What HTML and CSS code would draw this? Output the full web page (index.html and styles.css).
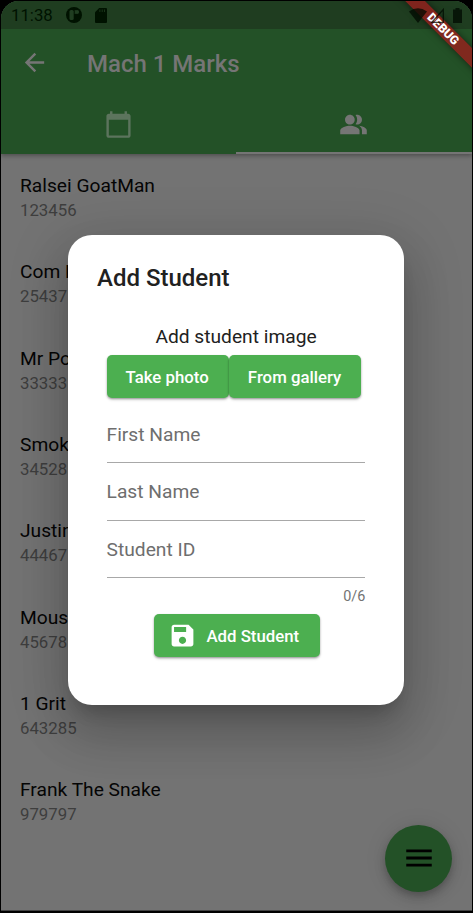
FILE: index.html
```html
<!DOCTYPE html>
<html lang="en">
<head>
<meta charset="utf-8">
<title>Mach 1 Marks</title>
<link rel="stylesheet" href="styles.css">
</head>
<body>
<div class="screen">
  <header class="header">
    <div class="status">
      <span class="clock">11:38</span>
      <svg class="st-app" viewBox="0 0 16 16"><circle cx="8" cy="8" r="8" fill="#001200"/><rect x="3.500" y="3" width="4.200" height="10" rx="1.500" fill="#1f3d20"/><path d="M8.700 3h1v4h-1z" fill="#1f3d20"/><circle cx="11" cy="5" r="2.100" fill="#1f3d20"/></svg>
      <svg class="st-sd" viewBox="0 0 12 15"><path d="M4.200 0H11a1 1 0 0 1 1 1v13a1 1 0 0 1-1 1H1a1 1 0 0 1-1-1V4.200z" fill="#001200"/><path d="M4.900 1.500v2.500M7.200 1.500v2.500M9.500 1.500v2.500" stroke="#1f3d20" stroke-width=".8"/></svg>
      <span class="spacer"></span>
      <div class="signals">
        <svg class="st-wifi" viewBox="0 0 18 15"><path d="M0 3.500Q9-3 18 3.500L9 15z" fill="#000a00"/></svg>
        <svg class="st-cell" viewBox="0 0 13 15"><path d="M12.300 1.500v12.800H.8z" fill="none" stroke="#000a00" stroke-width="1.300"/></svg>
        <svg class="st-batt" viewBox="0 0 9 15"><path d="M2.500 0h4v1.500H9V15H0V1.500h2.500z" fill="#000a00"/></svg>
      </div>
    </div>
    <div class="appbar">
      <svg class="back" viewBox="0 0 24 24"><path d="M20 11H7.830l5.590-5.590L12 4l-8 8 8 8 1.410-1.410L7.830 13H20v-2z" fill="#757575"/></svg>
      <h1 class="title">Mach 1 Marks</h1>
    </div>
    <nav class="tabs">
      <div class="tab"><svg viewBox="0 0 24 24"><path d="M20 3h-1V1h-2v2H7V1H5v2H4c-1.100 0-2 .9-2 2v16c0 1.100.9 2 2 2h16c1.100 0 2-.9 2-2V5c0-1.100-.9-2-2-2zm0 18H4V8h16v13z" fill="#5c745d"/></svg></div>
      <div class="tab active"><svg viewBox="0 0 24 24"><path d="M16.670 13.130C18.040 14.060 19 15.320 19 17v3h4v-3c0-2.180-3.570-3.470-6.330-3.870zM15 12c2.210 0 4-1.790 4-4s-1.790-4-4-4c-.47 0-.91.1-1.330.24C14.500 5.270 15 6.580 15 8s-.5 2.730-1.330 3.760c.42.14.86.24 1.330.24zM9 12c2.210 0 4-1.790 4-4s-1.790-4-4-4-4 1.790-4 4 1.790 4 4 4zM9 13c-2.670 0-8 1.340-8 4v3h16v-3c0-2.660-5.330-4-8-4z" fill="#757575"/></svg></div>
    </nav>
  </header>
  <ul class="list">
    <li><span class="name">Ralsei GoatMan</span><span class="id">123456</span></li>
    <li><span class="name">Com P</span><span class="id">25437</span></li>
    <li><span class="name">Mr Po</span><span class="id">33333</span></li>
    <li><span class="name">Smok</span><span class="id">34528</span></li>
    <li><span class="name">Justin</span><span class="id">44467</span></li>
    <li><span class="name">Mous</span><span class="id">45678</span></li>
    <li><span class="name">1 Grit</span><span class="id">643285</span></li>
    <li><span class="name">Frank The Snake</span><span class="id">979797</span></li>
  </ul>
  <div class="fab"><svg viewBox="0 0 24 24"><path d="M3 18h18v-2H3v2zm0-5h18v-2H3v2zm0-7v2h18V6H3z" fill="#000"/></svg></div>
  <section class="dialog">
    <h2>Add Student</h2>
    <div class="form">
      <p class="prompt">Add student image</p>
      <div class="photo-row">
        <div class="btn take">Take photo</div>
        <div class="btn gallery">From gallery</div>
      </div>
      <div class="field">First Name</div>
      <div class="field">Last Name</div>
      <div class="field">Student ID</div>
      <div class="counter">0/6</div>
      <div class="btn submit"><svg viewBox="0 0 24 24"><path d="M17 3H5c-1.110 0-2 .9-2 2v14c0 1.100.89 2 2 2h14c1.100 0 2-.9 2-2V7l-4-4zm-5 16c-1.660 0-3-1.340-3-3s1.340-3 3-3 3 1.340 3 3-1.340 3-3 3zm3-10H5V5h10v4z" fill="#fff"/></svg><span>Add Student</span></div>
    </div>
  </section>
  <div class="banner">DEBUG</div>
</div>
</body>
</html>
```
FILE: styles.css
```css
* { box-sizing: border-box; }
body {
  margin: 0;
  padding: 1px 1px 2px;
  height: 913px;
  background: #000;
  font-family: Roboto, sans-serif;
  overflow: hidden;
}
h1, h2, p, ul { margin: 0; padding: 0; font-weight: 400; }
svg { display: block; flex: none; }
.screen {
  position: relative;
  height: 910px;
  background: #737373;
  border-radius: 18px 18px 0 0;
  border-bottom: 1px solid #444;
  overflow: hidden;
}
.header {
  height: 153px;
  background: #235127;
  box-shadow: 0 2px 4px rgba(0, 0, 0, .3);
  position: relative;
}
.status {
  height: 28px;
  padding: 0 10px 0 10px;
  display: flex;
  align-items: center;
  background: #1f3d20;
}
.clock { width: 55px; font-size: 16.800px; color: #001200; }
.st-app { width: 16px; height: 16px; margin-right: 13px; }
.st-sd { width: 12px; height: 15px; }
.spacer { flex: 1; }
.signals { display: flex; position: relative; z-index: 2; opacity: .75; }
.st-wifi { width: 18px; height: 15px; margin-right: 4px; }
.st-cell { width: 13px; height: 15px; margin-right: 9px; }
.st-batt { width: 9px; height: 15px; }
.appbar { height: 67px; display: flex; align-items: center; padding-left: 19px; }
.back { width: 29px; height: 29px; margin-right: 38px; }
.title { font-size: 24px; font-weight: 500; color: #757575; line-height: 28px; padding-top: 2px; }
.tabs { display: flex; height: 58px; padding-right: 1px; }
.tab { flex: 1; display: flex; justify-content: center; align-items: center; border-bottom: 2px solid transparent; }
.tab svg { width: 29px; height: 29px; }
.active { border-bottom-color: #757575; margin-right: -1px; padding-right: 1px; }
.list { list-style: none; }
.list li { height: 86.300px; padding: 19.200px 0 0 19px; display: flex; flex-direction: column; }
.name { font-size: 19.200px; line-height: 25px; color: #050505; white-space: nowrap; }
.id { font-size: 16.800px; line-height: 24px; color: #3e3e3e; }
.fab {
  position: absolute;
  left: 384px;
  top: 823.500px;
  width: 67px;
  height: 67px;
  border-radius: 50%;
  background: #235127;
  display: flex;
  align-items: center;
  justify-content: center;
  box-shadow: 0 4px 6px -1px rgba(0, 0, 0, .16), 0 7px 12px rgba(0, 0, 0, .12), 0 1px 22px rgba(0, 0, 0, .1);
}
.fab svg { width: 34px; height: 34px; }
.dialog {
  position: absolute;
  left: 67px;
  top: 234px;
  width: 336px;
  height: 470px;
  padding: 29px 29px 0;
  border-radius: 24px;
  background: #fff;
  box-shadow: 0 13px 18px -8px rgba(0, 0, 0, .2), 0 29px 46px 4px rgba(0, 0, 0, .14), 0 11px 55px 10px rgba(0, 0, 0, .12);
}
h2 { font-size: 24px; line-height: 29px; font-weight: 500; color: #212121; }
.form { padding: 30px 9.600px 0; display: flex; flex-direction: column; }
.prompt { font-size: 19.200px; line-height: 27px; text-align: center; color: #212121; padding: 0 0 5px; }
.photo-row { display: flex; }
.btn {
  height: 43px;
  border-radius: 5px;
  background: #4caf50;
  color: #fff;
  font-size: 16.800px;
  font-weight: 500;
  display: flex;
  align-items: center;
  justify-content: center;
  white-space: nowrap;
  box-shadow: 0 1px 2px rgba(0, 0, 0, .3), 0 2px 3px rgba(0, 0, 0, .14);
}
.take { width: 122px; padding-right: 1px; }
.gallery { width: 132px; }
.field {
  height: 57.700px;
  padding-top: 15px;
  font-size: 19.200px;
  line-height: 28px;
  color: #6e6e6e;
  border-bottom: 1px solid #a8a8a8;
}
.photo-row + .field { height: 65px; padding-top: 23px; }
.counter { text-align: right; font-size: 14.400px; line-height: 17px; color: #737373; padding: 10px 0 9px; }
.submit { width: 166px; align-self: center; justify-content: flex-start; padding-left: 14.400px; margin-left: 1px; }
.submit svg { width: 29px; height: 29px; margin-right: 9.600px; }
.banner {
  position: absolute;
  left: 382px;
  top: 21px;
  width: 120px;
  height: 14.400px;
  transform: rotate(45deg);
  background: rgba(160, 28, 28, .75);
  box-shadow: 0 0 7px rgba(0, 0, 0, .5);
  color: #fff;
  font-size: 12.200px;
  font-weight: 900;
  line-height: 14.400px;
  text-align: center;
}
```
